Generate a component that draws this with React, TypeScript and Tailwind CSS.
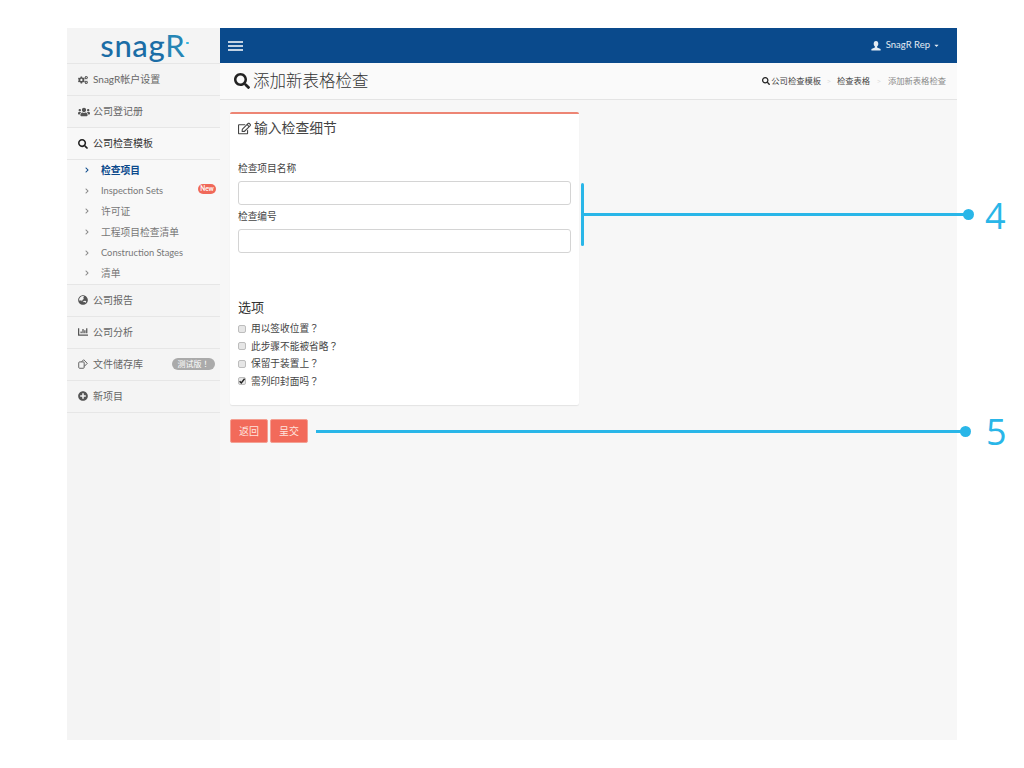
import React from "react";
import { FaCogs, FaUsers, FaSearch, FaGlobeAsia, FaChartBar, FaPlusCircle, FaRegEdit, FaChevronRight, FaCaretDown } from "react-icons/fa";

const font = { fontFamily: '"Lato", "Noto Sans CJK SC", sans-serif' };
const tc = { fontFamily: '"Noto Sans CJK TC", sans-serif' };

function MainItem({ icon, label, badge, dark }: { icon: React.ReactNode; label: string; badge?: React.ReactNode; dark?: boolean }) {
  return (
    <div className={`flex h-[32px] items-center border-b border-[#e6e6e6] pl-[11px] pr-[5px] text-[10px] ${dark ? "bg-[#f8f8f8] text-[#333]" : "text-[#666]"}`}>
      <span className={`flex w-[15px] shrink-0 items-center text-[10px] ${dark ? "text-[#222]" : "text-[#555]"}`}>{icon}</span>
      <span>{label}</span>
      {badge && <span className="ml-auto flex h-[12px] w-[43px] items-center justify-center rounded-full bg-[#aaaaaa] text-[8px] text-white">{badge}</span>}
    </div>
  );
}

function SubItem({ label, active, badge, latin }: { label: string; active?: boolean; badge?: string; latin?: boolean }) {
  return (
    <div className={`flex h-[20.6px] items-center pl-[18px] pr-[4px] ${latin ? "text-[9.3px]" : "text-[9.75px]"} ${active ? "font-bold text-[#0b4a8c]" : "text-[#777]"}`}>
      <FaChevronRight className={`mr-[12px] w-[4px] shrink-0 text-[6px] ${active ? "text-[#0b4a8c]" : "text-[#888]"}`} />
      <span>{label}</span>
      {badge && <span className="ml-auto mb-[4px] flex h-[10px] w-[18px] items-center justify-center rounded-full bg-[#f0695a] text-[6.5px] font-bold text-white">{badge}</span>}
    </div>
  );
}

function Check({ label, checked }: { label: string; checked?: boolean }) {
  return (
    <label className="flex h-[17.5px] items-center text-[9.7px] text-[#444]">
      <span className="relative mr-[5px] flex h-[8px] w-[8px] items-center justify-center">
        <input type="checkbox" defaultChecked={checked} className="h-[8px] w-[8px] appearance-none rounded-[2px] border border-[#bdbdbd] bg-[#e6e6e6]" />
        {checked && (
          <svg viewBox="0 0 8 8" className="pointer-events-none absolute left-0 top-0 h-[8px] w-[8px]">
            <path d="M1.6 4.2 L3.3 6 L6.6 1.8" fill="none" stroke="#222" strokeWidth="1.4" />
          </svg>
        )}
      </span>
      {label}
      <span style={tc}>？</span>
    </label>
  );
}

export default function App() {
  return (
    <div className="relative h-[768px] w-[1024px] overflow-hidden bg-white pt-[28px] pl-[67px]" style={font}>
      <div className="flex h-[712px] w-[890px]">
        <aside className="w-[153px] shrink-0 bg-[#f4f4f4]">
          <div className="flex h-[36px] items-center justify-center border-b border-[#e6e6e6] pl-[2px]">
            <span className="text-[31px] font-medium leading-none tracking-[0.6px] text-[#1b6da6]">snag</span>
            <span className="text-[31px] font-normal leading-none text-[#2585b5]">R</span>
            <span className="mb-[6px] ml-[1px] h-[2px] w-[3px] rounded-full bg-[#2fb4e0]" />
          </div>
          <MainItem icon={<FaCogs />} label="SnagR帐户设置" />
          <MainItem icon={<FaUsers className="text-[12px]" />} label="公司登记册" />
          <MainItem icon={<FaSearch />} label="公司检查模板" dark />
          <div className="border-b border-[#e6e6e6] bg-[#f8f8f8]">
            <SubItem label="检查项目" active />
            <SubItem label="Inspection Sets" badge="New" latin />
            <SubItem label="许可证" />
            <SubItem label="工程项目检查清单" />
            <SubItem label="Construction Stages" latin />
            <SubItem label="清单" />
          </div>
          <MainItem icon={<FaGlobeAsia />} label="公司报告" />
          <MainItem icon={<FaChartBar />} label="公司分析" />
          <MainItem
            icon={
              <svg viewBox="0 0 11 11" className="h-[10px] w-[10px]" fill="none" stroke="#555" strokeWidth="1">
                <rect x="0.8" y="3.2" width="6" height="7" rx="1" />
                <path d="M4 3 L6.2 0.8 L10.2 4.8 L7 8" />
              </svg>
            }
            label="文件储存库"
            badge={<>测试版<span style={tc}>！</span></>}
          />
          <MainItem icon={<FaPlusCircle />} label="新项目" />
        </aside>

        <div className="flex min-w-0 flex-1 flex-col bg-[#f7f7f7]">
          <header className="flex h-[35px] shrink-0 items-center justify-between bg-[#0a4a8c] pl-[8px] pr-[17px] text-white">
            <svg viewBox="0 0 15 10" className="h-[10px] w-[15px]" stroke="#ffffff" strokeWidth="1.3">
              <path d="M0 1 H15 M0 5 H15 M0 9 H15" />
            </svg>
            <div className="flex items-center text-[9.5px] text-[#e4ebf3]">
              <svg viewBox="0 0 10 10" className="mr-[5px] h-[10px] w-[10px]" fill="#e4ebf3">
                <path d="M5 0 C3.4 0 2.7 1.2 2.7 2.7 C2.7 4 3.3 5 3.9 5.5 L3.9 6.5 L0.4 8 L0.4 9.6 L9.6 9.6 L9.6 8 L6.1 6.5 L6.1 5.5 C6.7 5 7.3 4 7.3 2.7 C7.3 1.2 6.6 0 5 0 Z" />
              </svg>
              <span>SnagR Rep</span>
              <FaCaretDown className="ml-[3px] text-[7px]" />
            </div>
          </header>

          <div className="flex h-[37px] shrink-0 items-center justify-between border-b border-[#e4e4e4] bg-[#fafafa] pl-[14px] pr-[11px]">
            <div className="flex items-center text-[#333]">
              <FaSearch className="mr-[3px] text-[16px] text-[#222]" />
              <span className="text-[16.5px]" style={{ fontWeight: 300 }}>添加新表格检查</span>
            </div>
            <div className="flex items-center text-[8.3px] text-[#444]">
              <FaSearch className="mr-[1px] text-[8px] text-[#222]" />
              <span>公司检查模板</span>
              <span className="mx-[5.5px] text-[#ddd]">&gt;</span>
              <span>检查表格</span>
              <span className="mx-[6.5px] text-[#ddd]">&gt;</span>
              <span className="text-[#888]">添加新表格检查</span>
            </div>
          </div>

          <main className="pt-[12px] pl-[10px]">
            <section className="h-[293px] w-[349px] rounded-[2px] border-t-2 border-[#ed8574] bg-white px-[8px] shadow-[0_1px_1px_rgba(0,0,0,0.08)]">
              <div className="flex h-[28px] items-center text-[#444]">
                <FaRegEdit className="mr-[3px] text-[13px]" />
                <span className="text-[13.8px]">输入检查细节</span>
              </div>
              <div className="mt-[18px] text-[9.7px] leading-[16px] text-[#444]">检查项目名称</div>
              <input className="mt-[5px] block h-[24px] w-[333px] rounded-[3px] border border-[#d4d4d4] bg-white" />
              <div className="mt-[3px] text-[9.7px] leading-[16px] text-[#444]">检查编号</div>
              <input className="mt-[5px] block h-[24px] w-[333px] rounded-[3px] border border-[#d4d4d4] bg-white" />
              <div className="mt-[45px] text-[13px] leading-[18px] text-[#333]">选项</div>
              <div className="mt-[4px]">
                <Check label="用以签收位置" />
                <Check label="此步骤不能被省略" />
                <Check label="保留于装置上" />
                <Check label="需列印封面吗" checked />
              </div>
            </section>
            <div className="mt-[14px] flex gap-[2px]">
              <button className="h-[24px] w-[38px] rounded-[2px] border border-[#f4a093] bg-[#f26a5a] text-[10px] text-[#ffe3de]">返回</button>
              <button className="h-[24px] w-[38px] rounded-[2px] border border-[#f4a093] bg-[#f26a5a] text-[10px] text-[#ffe3de]">呈交</button>
            </div>
          </main>
        </div>
      </div>

      {/* annotation 4 */}
      <div className="absolute left-[581px] top-[183px] h-[63px] w-[3px] rounded-full bg-[#29b6e8]" />
      <div className="absolute left-[584px] top-[213px] h-[3px] w-[380px] bg-[#29b6e8]" />
      <div className="absolute left-[963px] top-[209px] h-[11px] w-[11px] rounded-full bg-[#29b6e8]" />
      <div className="absolute left-[985px] top-[194px] text-[36px] leading-[44px] text-[#29b6e8]" style={{ fontFamily: '"Open Sans", sans-serif' }}>4</div>
      {/* annotation 5 */}
      <div className="absolute left-[316px] top-[430px] h-[3px] w-[648px] bg-[#29b6e8]" />
      <div className="absolute left-[960px] top-[426px] h-[11px] w-[11px] rounded-full bg-[#29b6e8]" />
      <div className="absolute left-[986px] top-[410px] text-[36px] leading-[44px] text-[#29b6e8]" style={{ fontFamily: '"Open Sans", sans-serif' }}>5</div>
    </div>
  );
}
